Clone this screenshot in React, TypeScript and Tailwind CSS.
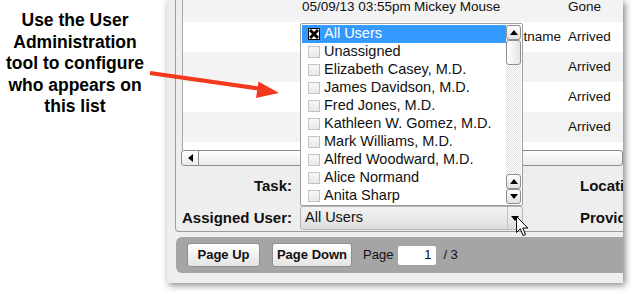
import React from 'react'

const FONT = { fontFamily: '"Liberation Sans", Arial, sans-serif' }

const ROWS = [
  { date: '05/09/13 03:55pm', name: 'Mickey Mouse', status: 'Gone' },
  { date: '', name: 'Firstname Lastname', status: 'Arrived' },
  { date: '', name: '', status: 'Arrived' },
  { date: '', name: '', status: 'Arrived' },
  { date: '', name: '', status: 'Arrived' },
  { date: '', name: '', status: '' },
]

const USERS = [
  'All Users',
  'Unassigned',
  'Elizabeth Casey, M.D.',
  'James Davidson, M.D.',
  'Fred Jones, M.D.',
  'Kathleen W. Gomez, M.D.',
  'Mark Williams, M.D.',
  'Alfred Woodward, M.D.',
  'Alice Normand',
  'Anita Sharp',
]

const Tri = ({ dir }: { dir: 'up' | 'down' | 'left' }) => {
  const pts = dir === 'up' ? '0,5 4,0 8,5' : dir === 'down' ? '0,0 8,0 4,5' : '5,0 5,8 0,4'
  const w = dir === 'left' ? 5 : 8
  const h = dir === 'left' ? 8 : 5
  return (
    <svg width={w} height={h} viewBox={`0 0 ${w} ${h}`}>
      <polygon points={pts} fill="#000" />
    </svg>
  )
}

const ScrollBtn = ({ dir }: { dir: 'up' | 'down' }) => (
  <div className="h-[15px] w-[15px] shrink-0 flex items-center justify-center rounded-[3px] border border-[#8e8e8e] bg-linear-to-b from-[#ffffff] to-[#e2e2e2]">
    <Tri dir={dir} />
  </div>
)

const Check = ({ on }: { on?: boolean }) =>
  on ? (
    <div className="w-[12px] h-[12px] shrink-0 border border-black bg-white flex items-center justify-center">
      <svg width="10" height="10" viewBox="0 0 10 10">
        <path d="M1 1 L9 9 M9 1 L1 9" stroke="#000" strokeWidth="3" />
      </svg>
    </div>
  ) : (
    <div className="w-[12px] h-[12px] shrink-0 border border-[#c3c3c3] bg-linear-to-b from-[#f8f8f8] to-[#e9e9e9]" />
  )

const Button = ({ label, w }: { label: string; w: string }) => (
  <div
    className={`${w} h-[24px] shrink-0 flex items-center justify-center rounded-[3px] border border-[#8f8f8f] bg-linear-to-b from-[#ffffff] to-[#e4e4e4] text-[13px] font-bold text-[#111]`}
  >
    {label}
  </div>
)

export default function App() {
  return (
    <div className="relative w-[632px] h-[294px] overflow-hidden bg-white flex items-start" style={FONT}>
      {/* annotation */}
      <div className="w-[150px] shrink-0 pt-[10px] text-center font-bold text-[17.5px] leading-[21.5px] text-black">
        Use the User
        <br />
        Administration
        <br />
        tool to configure
        <br />
        who appears on
        <br />
        this list
      </div>

      {/* window */}
      <div className="ml-[17px] w-[456px] h-[283px] shrink-0 overflow-hidden bg-[#eeeeee] shadow-[2px_2px_7px_rgba(0,0,0,0.5)] flex flex-col">
        <div className="ml-[8px] h-[232px] shrink-0 border-l border-b border-[#9c9c9c] rounded-bl-[4px] flex flex-col">
          {/* table */}
          <div className="ml-[6px] h-[166px] shrink-0 flex flex-col">
            <div className="h-[150px] shrink-0 overflow-hidden border-l border-[#a8a8a8] bg-white">
              <div className="-mt-[8px] text-[13.5px] text-[#111]">
                {ROWS.map((r, i) => (
                  <div key={i} className={`h-[30px] flex items-center ${i % 2 === 0 ? 'bg-[#f3f3f3]' : 'bg-white'}`}>
                    <div className="w-[119px] shrink-0" />
                    <div className="w-[112px] shrink-0 whitespace-nowrap">{r.date}</div>
                    <div className="w-[154px] shrink-0 whitespace-nowrap text-right pr-[7px]">
                      {i === 0 ? <div className="text-left">{r.name}</div> : r.name}
                    </div>
                    <div className="whitespace-nowrap">{r.status}</div>
                  </div>
                ))}
              </div>
            </div>
            <div className="h-[16px] shrink-0 -ml-px flex rounded-[3px] border border-[#8c8c8c] bg-linear-to-b from-[#ffffff] to-[#ebebeb]">
              <div className="w-[17px] flex items-center justify-center border-r border-[#8c8c8c]">
                <Tri dir="left" />
              </div>
            </div>
          </div>

          {/* form */}
          <div className="flex flex-col pt-[8px] gap-[8px] text-[15px] font-bold text-[#111]">
            <div className="h-[24px] flex items-center">
              <div className="w-[116px] shrink-0 text-right">Task:</div>
              <div className="w-[223px] shrink-0 ml-[8px]" />
              <div className="ml-[57px] shrink-0 whitespace-nowrap">Location:</div>
            </div>
            <div className="h-[24px] flex items-center">
              <div className="w-[116px] shrink-0 text-right whitespace-nowrap">Assigned User:</div>
              <div className="relative w-[223px] h-[24px] shrink-0 ml-[8px] flex rounded-[3px] border border-[#b5b5b5] bg-linear-to-b from-[#f3f3f3] to-[#dedede] font-normal text-[14.5px]">
                <div className="flex-1 flex items-center pl-[4px]">All Users</div>
                <div className="w-[15px] flex items-center justify-center border-l border-[#c4c4c4]">
                  <Tri dir="down" />
                </div>

                {/* open dropdown list */}
                <div className="absolute left-[-1px] bottom-[calc(100%+1px)] w-[223px] h-[183px] flex rounded-[2px] border border-[#9f9f9f] bg-white p-px">
                  <div className="flex-1 flex flex-col">
                    {USERS.map((u, i) => (
                      <div
                        key={u}
                        className={`h-[18px] shrink-0 flex items-center pl-[6px] gap-[1px] ${i === 0 ? 'bg-[#3399ff] text-white' : 'text-[#111]'}`}
                      >
                        <Check on={i === 0} />
                        <div
                          className={`flex-1 h-full flex items-center whitespace-nowrap border pl-[2px] ${i === 0 ? 'border-dotted border-[#e08a2a]' : 'border-transparent'}`}
                        >
                          {u}
                        </div>
                      </div>
                    ))}
                  </div>
                  <div className="w-[15px] shrink-0 flex flex-col bg-[repeating-conic-gradient(#e4e4e4_0_25%,#fbfbfb_0_50%)] bg-[length:2px_2px]">
                    <ScrollBtn dir="up" />
                    <div className="h-[25px] shrink-0 rounded-[3px] border border-[#8e8e8e] bg-linear-to-r from-[#ffffff] to-[#e4e4e4]" />
                    <div className="flex-1" />
                    <ScrollBtn dir="up" />
                    <ScrollBtn dir="down" />
                  </div>
                </div>
              </div>
              <div className="ml-[57px] shrink-0 whitespace-nowrap">Provider:</div>
            </div>
          </div>
        </div>

        {/* paging bar */}
        <div className="ml-[9px] mt-[5px] h-[36px] shrink-0 bg-[#a5a5a5] rounded-l-[6px] flex items-center pl-[11px] text-[13px] text-[#111]">
          <Button label="Page Up" w="w-[73px]" />
          <div className="ml-[12px] shrink-0">
            <Button label="Page Down" w="w-[80px]" />
          </div>
          <div className="ml-[11px] shrink-0">Page</div>
          <div className="ml-[5px] w-[38px] h-[19px] shrink-0 bg-white rounded-[2px] flex items-center justify-end pr-[5px]">1</div>
          <div className="ml-[7px] shrink-0">/ 3</div>
        </div>
      </div>

      {/* red arrow */}
      <svg className="absolute left-0 top-0" width="632" height="294" viewBox="0 0 632 294">
        <line x1="150" y1="73" x2="262" y2="89" stroke="#f2381d" strokeWidth="4" />
        <polygon points="279,93 258.5,81.5 256,98" fill="#f2381d" />
      </svg>

      {/* mouse pointer */}
      <svg className="absolute left-[516px] top-[216px]" width="13" height="22" viewBox="0 0 13 22">
        <path d="M0.5 0.5 L0.5 16.5 L4.3 12.8 L7 19.5 L9.5 18.5 L6.8 12 L11.8 12 Z" fill="#fff" stroke="#000" strokeWidth="1" />
      </svg>
    </div>
  )
}
